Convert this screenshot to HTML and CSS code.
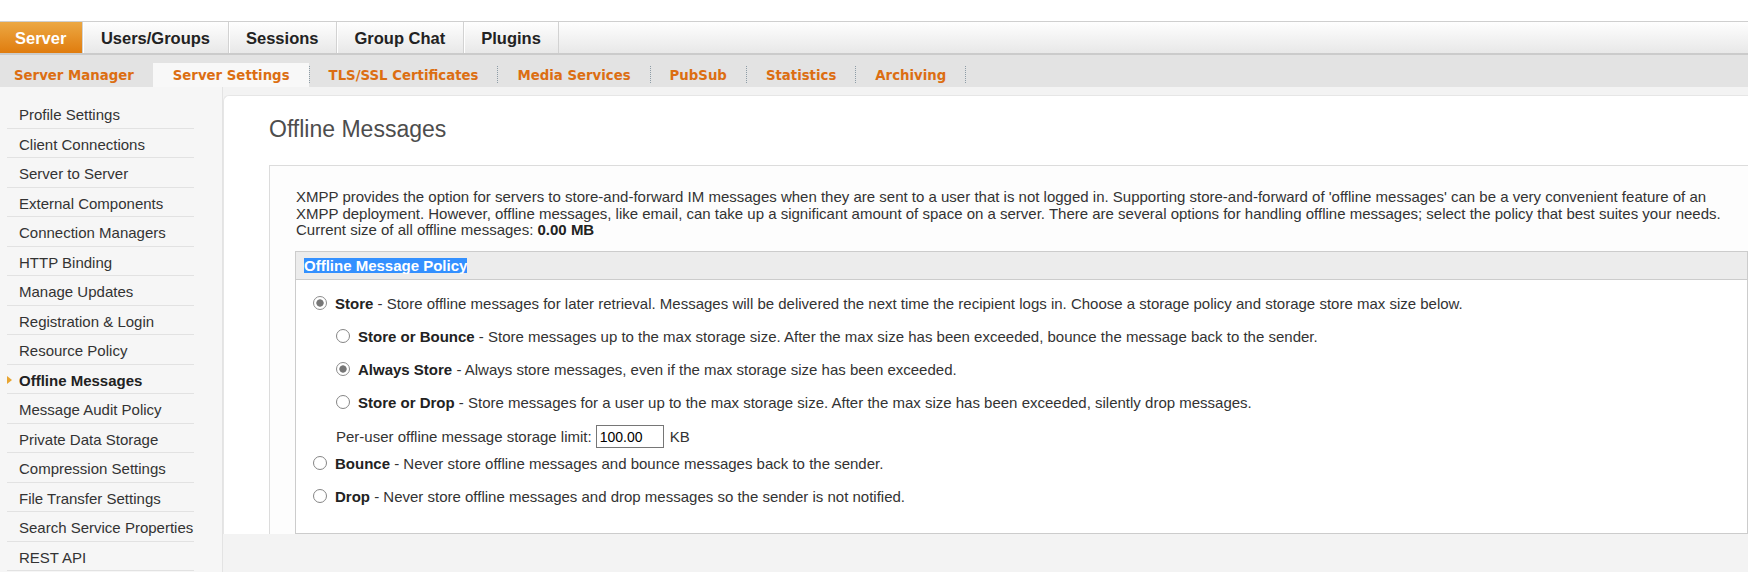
FILE: index.html
```html
<!DOCTYPE html>
<html lang="en">
<head>
<meta charset="utf-8">
<title>Offline Messages</title>
<link rel="stylesheet" href="styles.css">
</head>
<body>
<header class="masthead"></header>

<nav class="tabs">
  <a class="tab tab-active">Server</a>
  <a class="tab">Users/Groups</a>
  <a class="tab">Sessions</a>
  <a class="tab">Group Chat</a>
  <a class="tab">Plugins</a>
</nav>

<nav class="subtabs">
  <a class="subtab">Server Manager</a>
  <a class="subtab subtab-active">Server Settings</a>
  <a class="subtab">TLS/SSL Certificates</a>
  <a class="subtab">Media Services</a>
  <a class="subtab">PubSub</a>
  <a class="subtab">Statistics</a>
  <a class="subtab">Archiving</a>
</nav>

<div class="main">
  <aside class="sidebar">
    <ul class="side-list">
      <li class="side-item">Profile Settings</li>
      <li class="side-item">Client Connections</li>
      <li class="side-item">Server to Server</li>
      <li class="side-item">External Components</li>
      <li class="side-item">Connection Managers</li>
      <li class="side-item">HTTP Binding</li>
      <li class="side-item">Manage Updates</li>
      <li class="side-item">Registration &amp; Login</li>
      <li class="side-item">Resource Policy</li>
      <li class="side-item side-current">Offline Messages</li>
      <li class="side-item">Message Audit Policy</li>
      <li class="side-item">Private Data Storage</li>
      <li class="side-item">Compression Settings</li>
      <li class="side-item">File Transfer Settings</li>
      <li class="side-item">Search Service Properties</li>
      <li class="side-item">REST API</li>
    </ul>
  </aside>

  <section class="panel">
    <h1 class="page-title">Offline Messages</h1>
    <div class="info-box">
      <p class="intro">XMPP provides the option for servers to store-and-forward IM messages when they are sent to a user that is not logged in. Supporting store-and-forward of 'offline messages' can be a very convenient feature of an XMPP deployment. However, offline messages, like email, can take up a significant amount of space on a server. There are several options for handling offline messages; select the policy that best suites your needs.<br>Current size of all offline messages: <b>0.00 MB</b></p>

      <div class="policy">
        <div class="policy-head"><span class="selected-text">Offline Message Policy</span></div>
        <div class="policy-body">
          <label class="opt opt-store"><input type="radio" class="radio" name="policy" checked><span><b>Store</b> - Store offline messages for later retrieval. Messages will be delivered the next time the recipient logs in. Choose a storage policy and storage store max size below.</span></label>
          <label class="opt opt-sub"><input type="radio" class="radio" name="strategy"><span><b>Store or Bounce</b> - Store messages up to the max storage size. After the max size has been exceeded, bounce the message back to the sender.</span></label>
          <label class="opt opt-sub"><input type="radio" class="radio" name="strategy" checked><span><b>Always Store</b> - Always store messages, even if the max storage size has been exceeded.</span></label>
          <label class="opt opt-sub"><input type="radio" class="radio" name="strategy"><span><b>Store or Drop</b> - Store messages for a user up to the max storage size. After the max size has been exceeded, silently drop messages.</span></label>
          <div class="opt opt-limit">Per-user offline message storage limit: <input type="text" class="limit-input" value="100.00"> KB</div>
          <label class="opt opt-bounce"><input type="radio" class="radio" name="policy"><span><b>Bounce</b> - Never store offline messages and bounce messages back to the sender.</span></label>
          <label class="opt"><input type="radio" class="radio" name="policy"><span><b>Drop</b> - Never store offline messages and drop messages so the sender is not notified.</span></label>
        </div>
      </div>
    </div>
  </section>
</div>
</body>
</html>
```

FILE: styles.css
```css
html, body {
  margin: 0;
  padding: 0;
  overflow: hidden;
  background: #fff;
  font-family: "Liberation Sans", Arial, sans-serif;
  color: #333;
}

/* blank strip above the navigation */
.masthead {
  height: 21px;
}

/* primary tab row */
.tabs {
  display: flex;
  height: 31px;
  border-top: 1px solid #cfcfcf;
  border-bottom: 2px solid #cbcbcb;
  background: linear-gradient(#fefefe, #e8e8e8);
}

.tab {
  display: block;
  padding: 0 17.5px;
  line-height: 32px;
  font-size: 16.5px;
  font-weight: bold;
  color: #222;
  border-right: 1px solid #d2d2d2;
  box-shadow: inset 1px 0 0 #fff;
}

.tab-active {
  padding: 0 16px 0 15px;
  color: #fff;
  background: linear-gradient(#eca843, #e07c0e);
  box-shadow: none;
}

/* secondary tab row */
.subtabs {
  display: flex;
  align-items: flex-end;
  height: 32px;
  background: #e3e3e3;
}

.subtab {
  position: relative;
  display: block;
  height: 24px;
  padding: 0 19px 0 20px;
  line-height: 25px;
  font-family: "DejaVu Sans", Verdana, sans-serif;
  font-size: 13.3px;
  font-weight: bold;
  color: #dc6e12;
}

.subtab:first-child {
  padding-left: 14px;
}

.subtab::after {
  content: "";
  position: absolute;
  right: -1px;
  top: 3px;
  height: 17px;
  border-right: 1px dotted #8d9ca6;
}

.subtab-active {
  background: #f8f8f8;
}

/* page body */
.main {
  display: flex;
  align-items: flex-start;
  background: #f3f3f3;
  height: 500px;
}

.sidebar {
  flex: none;
  width: 222px;
  height: 100%;
  background: #f6f6f6;
  border-right: 1px solid #e3e3e3;
}

.side-list {
  list-style: none;
  margin: 12px 0 0 7px;
  padding: 0;
  width: 187px;
}

.side-item {
  position: relative;
  height: 28.5px;
  line-height: 31.5px;
  padding-left: 12px;
  font-size: 15px;
  color: #333;
  border-bottom: 1px solid #e2e2e2;
  white-space: nowrap;
}

.side-current {
  font-weight: bold;
  color: #222;
}

.side-current::before {
  content: "";
  position: absolute;
  left: 0;
  top: 11px;
  border-left: 5px solid #e8a531;
  border-top: 4.5px solid transparent;
  border-bottom: 4.5px solid transparent;
}

.panel {
  flex: 1;
  min-width: 0;
  margin-top: 8px;
  padding: 20px 0 0 45px;
  background: #fff;
  border-top: 1px solid #e6e6e6;
  border-left: 1px solid #e6e6e6;
  border-top-left-radius: 6px;
}

.page-title {
  margin: 0 0 23px;
  font-size: 23px;
  font-weight: normal;
  line-height: 26px;
  color: #4d4d4d;
}

.info-box {
  width: 1453px;
  padding: 23px 25px 0 25px;
  background: #fdfdfd;
  border: 1px solid #dcdcdc;
  border-bottom: 0;
}

.intro {
  margin: 0 0 12px 1px;
  font-size: 15px;
  line-height: 16.7px;
  color: #333;
}

.intro b {
  color: #222;
}

.policy {
  border: 1px solid #cccccc;
  background: #fff;
}

.policy-head {
  height: 27px;
  padding-left: 8px;
  background: #ececec;
  border-bottom: 1px solid #cccccc;
  display: flex;
  align-items: center;
  font-size: 15px;
  font-weight: bold;
}

.selected-text {
  background: #3390ff;
  color: #fff;
  line-height: 15px;
}

.policy-body {
  padding: 13px 0 27px 17px;
  font-size: 15px;
  color: #333;
}

.opt {
  display: flex;
  align-items: center;
  height: 20px;
  margin-top: 13px;
  white-space: nowrap;
}

.opt:first-child {
  margin-top: 0;
}

.opt b {
  color: #222;
}

.opt-sub {
  padding-left: 23px;
}

.opt-limit {
  padding-left: 23px;
  height: 23px;
}

.opt-bounce {
  margin-top: 5px;
}

.radio {
  appearance: none;
  -webkit-appearance: none;
  flex: none;
  width: 14px;
  height: 14px;
  margin: 0 8px 0 0;
  border: 1px solid #858585;
  border-radius: 50%;
  background: #fff;
}

.radio:checked {
  background: radial-gradient(circle, #767676 0 3.3px, #fff 4px);
  border-color: #8c8c8c;
}

.limit-input {
  box-sizing: border-box;
  width: 68px;
  height: 23px;
  margin: 0 6px 0 4px;
  padding: 0 3px;
  border: 1px solid #767676;
  font-family: "Liberation Sans", Arial, sans-serif;
  font-size: 14px;
  color: #000;
}
```
